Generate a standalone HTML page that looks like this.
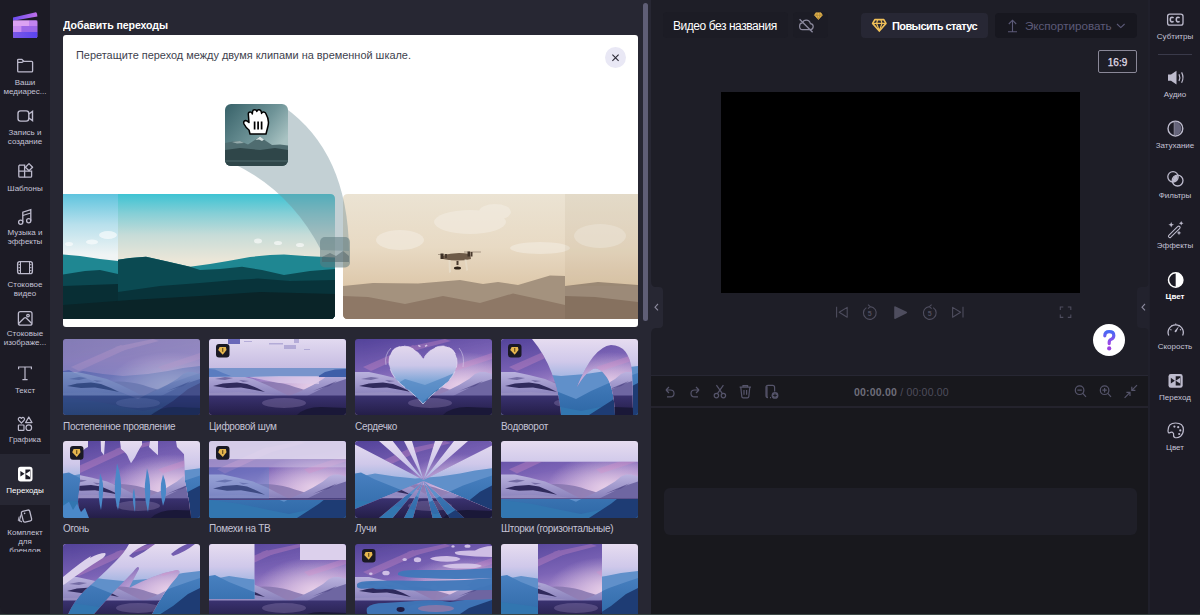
<!DOCTYPE html>
<html><head><meta charset="utf-8">
<style>
*{margin:0;padding:0;box-sizing:border-box}
html,body{width:1200px;height:615px;overflow:hidden;background:#3b4744;font-family:"Liberation Sans",sans-serif}
.a{position:absolute}
#app{position:absolute;left:0;top:0;width:1200px;height:614px;overflow:hidden;background:#1e1e27}
#lsb{left:0;top:0;width:50px;height:614px;background:#1c1b25;border-bottom-left-radius:8px}
.lt{position:absolute;left:0;width:50px;text-align:center;color:#c5c3d6;font-size:8px;line-height:9px;white-space:nowrap}
#panel{left:50px;top:0;width:601px;height:614px;background:#272733}
#main{left:651px;top:0;width:499px;height:376px;background:#1e1e27}
#tl{left:651px;top:376px;width:499px;height:238px;background:#18181d}
#rsb{left:1150px;top:0;width:50px;height:614px;background:#1c1b25;border-bottom-right-radius:8px}
.th{position:absolute;width:137px;height:76px;border-radius:3px;overflow:hidden}
.th svg{display:block}
.tl{position:absolute;color:#c5c3d6;font-size:10px;line-height:12px;margin-top:0.7px;white-space:nowrap;letter-spacing:-0.3px}
.ic{position:absolute;overflow:visible}
.badge{position:absolute;left:7px;top:5px;width:13px;height:13px;border-radius:3px;background:#1e1d26}
</style></head><body>
<div id="app">
  <!-- LEFT SIDEBAR -->
  <div id="lsb" class="a"></div>
  <div class="a" style="left:0;top:454px;width:50px;height:51px;background:#272733"></div>
  <div class="lt" style="top:78px">Ваши<br>медиарес...</div>
  <div class="lt" style="top:128px">Запись и<br>создание</div>
  <div class="lt" style="top:183.5px">Шаблоны</div>
  <div class="lt" style="top:228px">Музыка и<br>эффекты</div>
  <div class="lt" style="top:280px">Стоковое<br>видео</div>
  <div class="lt" style="top:329px">Стоковые<br>изображе...</div>
  <div class="lt" style="top:386px">Текст</div>
  <div class="lt" style="top:435px">Графика</div>
  <div class="lt" style="top:486px;color:#fff">Переходы</div>
  <div class="lt" style="top:528px;height:24px;overflow:hidden">Комплект<br>для<br>брендов</div>


  <!-- LEFT ICONS -->
  <svg class="ic" style="left:0;top:0" width="50" height="50" viewBox="0 0 50 50">
    <defs>
      <linearGradient id="lg1" x1="0" y1="0" x2="1" y2="0"><stop offset="0" stop-color="#6a4cf0"/><stop offset="1" stop-color="#c070e8"/></linearGradient>
      <linearGradient id="lg3" x1="0" y1="0" x2="1" y2="0"><stop offset="0" stop-color="#7a58e6"/><stop offset="1" stop-color="#5a44f0"/></linearGradient><linearGradient id="lg2" x1="0" y1="0" x2="1" y2="1"><stop offset="0" stop-color="#d9a0f0"/><stop offset="1" stop-color="#b070e8"/></linearGradient>
    </defs>
    <path d="M13 17.6 L34.8 12.4 Q36.6 12.1 37 13.8 L37.4 16.4 L13 20.8 Z" fill="url(#lg1)"/>
    <rect x="13" y="20.5" width="24.3" height="17.5" rx="1.5" fill="#b67ae8"/>
    <rect x="13" y="20.5" width="16" height="5.5" fill="#dba2f2"/>
    <rect x="29" y="20.5" width="8.3" height="5.5" fill="#c284ee"/>
    <rect x="13" y="26" width="8.5" height="6" fill="#c88cf0"/>
    <rect x="21.5" y="26" width="15.8" height="6" fill="#9c66e6"/>
    <path d="M13 32 H37.3 V36.5 Q37.3 38 35.8 38 H14.5 Q13 38 13 36.5 Z" fill="url(#lg3)"/>
  </svg>
  <svg class="ic" style="left:0;top:50px" width="50" height="30" viewBox="0 0 50 30" fill="none" stroke="#bdbbcd" stroke-width="1.3">
    <path d="M17.7 11.5 V9.8 Q17.7 9.3 18.5 9.3 H21.8 L23.8 11.3 H31.6 Q32.6 11.3 32.6 12.3 V21 Q32.6 21.9 31.6 21.9 H18.7 Q17.7 21.9 17.7 21 Z"/>
    <path d="M17.7 12.4 H22 L23.8 11.3"/>
  </svg>
  <svg class="ic" style="left:0;top:100px" width="50" height="30" viewBox="0 0 50 30" fill="none" stroke="#bdbbcd" stroke-width="1.4">
    <rect x="18" y="10.9" width="10.8" height="10.2" rx="2.6"/>
    <path d="M28.8 14 L32.5 11.4 V20.6 L28.8 18"/>
  </svg>
  <svg class="ic" style="left:0;top:155px" width="50" height="30" viewBox="0 0 50 30" fill="none" stroke="#bdbbcd" stroke-width="1.3">
    <path d="M19 10.2 H24.6 V22.2 H19.8 Q18.8 22.2 18.8 21.2 V11.2 Q18.8 10.2 19.8 10.2 Z"/>
    <path d="M18.8 16.2 H31.6 V21.2 Q31.6 22.2 30.6 22.2 H24.6"/>
    <path d="M29 8.6 L32.6 12.2 L29 15.8 L25.4 12.2 Z" stroke-linejoin="round"/>
  </svg>
  <svg class="ic" style="left:0;top:205px" width="50" height="25" viewBox="0 0 50 25" fill="none" stroke="#bdbbcd" stroke-width="1.3">
    <circle cx="20.7" cy="17.3" r="2.1"/>
    <circle cx="28.7" cy="15.8" r="2.1"/>
    <path d="M22.8 17.3 V7.2 L30.8 4.6 V15.8"/>
    <path d="M22.8 10.5 L30.8 8"/>
  </svg>
  <svg class="ic" style="left:0;top:255px" width="50" height="25" viewBox="0 0 50 25" fill="none" stroke="#bdbbcd" stroke-width="1.3">
    <rect x="17.6" y="6.6" width="14.8" height="12" rx="2.2"/>
    <path d="M20.5 6.6 V18.6 M29.5 6.6 V18.6" stroke-width="1"/>
    <g fill="#bdbbcd" stroke="none"><rect x="18.6" y="9" width="1.2" height="1.2"/><rect x="18.6" y="12" width="1.2" height="1.2"/><rect x="18.6" y="15" width="1.2" height="1.2"/><rect x="30.2" y="9" width="1.2" height="1.2"/><rect x="30.2" y="12" width="1.2" height="1.2"/><rect x="30.2" y="15" width="1.2" height="1.2"/></g>
  </svg>
  <svg class="ic" style="left:0;top:305px" width="50" height="25" viewBox="0 0 50 25" fill="none" stroke="#bdbbcd" stroke-width="1.3">
    <rect x="18.4" y="6.6" width="13.6" height="13.6" rx="2"/>
    <path d="M18.6 18.5 L24.2 13 Q25.2 12.2 26.2 13 L31.8 18.5"/>
    <circle cx="28" cy="10.6" r="1.3"/>
  </svg>
  <svg class="ic" style="left:0;top:360px" width="50" height="25" viewBox="0 0 50 25" fill="none" stroke="#bdbbcd" stroke-width="1.2">
    <path d="M18.6 9.2 V7 H31.4 V9.2 M25 7 V19.6 M22.4 19.6 H27.6"/>
  </svg>
  <svg class="ic" style="left:0;top:410px" width="50" height="25" viewBox="0 0 50 25" fill="none" stroke="#bdbbcd" stroke-width="1.2">
    <path d="M21.4 13 L18.6 10.2 Q17.8 9 18.8 7.9 Q20 6.9 21.4 8.3 Q22.8 6.9 24 7.9 Q25 9 24.2 10.2 Z" stroke-linejoin="round"/>
    <path d="M28.8 7 L32 12.6 H25.6 Z" stroke-linejoin="round"/>
    <rect x="18.4" y="15" width="5.6" height="5.4" rx="0.6"/>
    <circle cx="28.8" cy="17.7" r="2.8"/>
  </svg>
  <svg class="ic" style="left:0;top:460px" width="50" height="25" viewBox="0 0 50 25">
    <rect x="18" y="6.8" width="14.5" height="14.6" rx="2.6" fill="#fff"/>
    <path d="M20.4 11 V16.5 L24.6 13.8 Z" fill="#1e1d28"/>
    <path d="M25.4 9.5 H30.4 V19.3 H25.4 Z M25.4 14 L30 17 V11 Z" fill="#1e1d28" fill-rule="evenodd"/>
  </svg>
  <svg class="ic" style="left:0;top:505px" width="50" height="22" viewBox="0 0 50 22" fill="none" stroke="#bdbbcd" stroke-width="1.3">
    <rect x="22.2" y="5.6" width="8.6" height="11" rx="1.6" transform="rotate(-14 26.5 11.1)"/>
    <circle cx="24.6" cy="8.4" r="0.8" fill="#bdbbcd" stroke="none"/>
    <path d="M21.2 9.5 L19.4 15.6 L22 17" stroke-width="1.1"/>
    <path d="M19.2 11.5 L18.2 15.4 L19.6 16.4" stroke-width="0.9"/>
  </svg>

  <!-- PANEL -->
  <div id="panel" class="a"></div>
  <div class="a" style="left:63px;top:18.8px;font-size:11.4px;font-weight:700;color:#fff;letter-spacing:-0.1px;white-space:nowrap;transform:scaleX(0.93);transform-origin:0 0">Добавить переходы</div>
  <div class="a" style="left:63px;top:35px;width:575px;height:292px;background:#fff;border-radius:3px;overflow:hidden">
    <div class="a" style="left:13px;top:13.7px;font-size:11.5px;color:#403f4e;letter-spacing:0;white-space:nowrap;transform:scaleX(0.95);transform-origin:0 0">Перетащите переход между двумя клипами на временной шкале.</div>
  </div>
  <svg class="a" style="left:63px;top:35px" width="575" height="292" viewBox="63 35 575 292">
    <defs>
      <linearGradient id="skyT" gradientUnits="userSpaceOnUse" x1="0" y1="194" x2="0" y2="260"><stop offset="0" stop-color="#3ec3d3"/><stop offset="0.3" stop-color="#86cfd6"/><stop offset="0.62" stop-color="#c6dcd8"/><stop offset="1" stop-color="#ebe6d8"/></linearGradient>
      <linearGradient id="skyT2" gradientUnits="userSpaceOnUse" x1="0" y1="194" x2="0" y2="255"><stop offset="0" stop-color="#5ec4de"/><stop offset="0.5" stop-color="#b8e0ec"/><stop offset="1" stop-color="#f0f4f4"/></linearGradient>
      <linearGradient id="skyD" gradientUnits="userSpaceOnUse" x1="0" y1="194" x2="0" y2="290"><stop offset="0" stop-color="#ebe3d3"/><stop offset="0.55" stop-color="#e8dac4"/><stop offset="1" stop-color="#dcc6a8"/></linearGradient>
      <linearGradient id="mtnD" x1="0" y1="0" x2="0" y2="1"><stop offset="0" stop-color="#a6917b"/><stop offset="1" stop-color="#8c7662"/></linearGradient>
      <linearGradient id="thG" gradientUnits="userSpaceOnUse" x1="228" y1="104" x2="280" y2="146"><stop offset="0" stop-color="#3a646b"/><stop offset="0.6" stop-color="#6f9498"/><stop offset="1" stop-color="#a8c2c2"/></linearGradient>
      <clipPath id="cL"><path d="M63 194 H330 Q335 194 335 199 V314 Q335 319 330 319 H63 Z"/></clipPath>
      <clipPath id="cR"><path d="M348 194 H638 V319 H348 Q343 319 343 314 V199 Q343 194 348 194 Z"/></clipPath>
      <clipPath id="cTh"><rect x="225" y="104" width="63" height="62" rx="6"/></clipPath>
    </defs>
    <g clip-path="url(#cL)">
      <rect x="63" y="194" width="272" height="125" fill="url(#skyT)"/>
      <rect x="63" y="194" width="55" height="125" fill="url(#skyT2)"/>
      <g fill="#fff" opacity="0.6"><ellipse cx="108" cy="235" rx="9" ry="4"/><ellipse cx="92" cy="242" rx="6" ry="2.5"/><ellipse cx="69" cy="244" rx="4" ry="2"/><ellipse cx="258" cy="241" rx="4" ry="2.5"/><ellipse cx="278" cy="243" rx="4" ry="2"/><ellipse cx="300" cy="245" rx="4" ry="2"/></g>
      <path d="M63 254.5 L80 256 L100 259 L118 261 V290 H63 Z" fill="#1f8792"/>
      <path d="M63 274.5 L85 271 L100 270 L118 274 V319 H63 Z" fill="#0b4750"/>
      <path d="M63 286 L118 284 V319 H63 Z" fill="#082e34"/>
      <path d="M118 259.8 L130 258 L146 256.8 L165 261 L190 266.8 L210 264 L228 261 L250 257 L270 255 L284 254.5 L305 256 L335 257.5 V319 H118 Z" fill="#1f8792"/>
      <path d="M118 259.8 L130 258 L146 256.8 L165 261 L190 266.8 L200 270 L220 269 L242 266.8 L262 270 L284 275 L310 271 L335 269 V319 H118 Z" fill="#0b4a52"/>
      <path d="M118 292 L160 286 L200 283 L235 280 L258 278.5 L290 281 L335 280 V319 H118 Z" fill="#08333a"/>
      <path d="M63 305 L130 300 L200 296 L260 292 L335 294 V319 H63 Z" fill="#0a2428"/>
    </g>
    <g clip-path="url(#cR)">
      <rect x="343" y="194" width="295" height="125" fill="url(#skyD)"/>
      <g fill="#f4eee4" opacity="0.55"><ellipse cx="400" cy="240" rx="24" ry="10"/><ellipse cx="470" cy="222" rx="36" ry="12"/><ellipse cx="495" cy="212" rx="16" ry="8"/><ellipse cx="600" cy="236" rx="26" ry="12"/><ellipse cx="540" cy="248" rx="30" ry="6"/></g>
      <path d="M343 286 L373 283 L418 283.5 L460 280 L483 284 L498 282 L518 285 L550 275.5 L565 276 V319 H343 Z" fill="#a4927e"/>
      <path d="M343 296 L368 297 L405 304 L443 296 L480 303 L513 293.5 L543 300 L565 305 V319 H343 Z" fill="#8e7866"/>
      <path d="M565 286 L598 282 L638 285 V319 H565 Z" fill="#9c8a78"/>
      <path d="M565 296 L595 297 L638 302 V319 H565 Z" fill="#86715f"/>
      <rect x="565" y="194" width="73" height="92" fill="#8a7050" opacity="0.08"/>
      <path d="M438 254.5 H452 M464 252 H481" stroke="#6a5a4a" stroke-width="0.7" opacity="0.7"/>
      <path d="M442 256 Q455 251 470 254 L471 259 Q458 262 443 259 Z" fill="#6e5a48"/>
      <rect x="440.5" y="253.5" width="3" height="5.5" fill="#3e3026"/><rect x="445" y="254" width="2" height="4" fill="#4a3a2e"/>
      <rect x="467.5" y="251.5" width="2.5" height="5" fill="#3e3026"/><rect x="470.5" y="252" width="2" height="4.5" fill="#4a3a2e"/>
      <path d="M448.5 260 L450.5 260 L451 272 L449 273 Z" fill="#e6dac6"/>
      <path d="M464.5 259.5 L466.5 259.5 L468 270 L466.5 271 Z" fill="#e6dac6"/>
      <rect x="456.5" y="261" width="2" height="4" fill="#4a3a2e"/>
      <ellipse cx="457.5" cy="268" rx="3.6" ry="1.6" fill="#2e2218"/>
    </g>
    <path d="M232 163 Q290 190 321 250 L349 251 Q348 152 284 107 Z" fill="#6f8e98" opacity="0.42"/>
    <rect x="320" y="237" width="30" height="30.5" rx="5" fill="#5d7a80" opacity="0.55"/>
    <path d="M322 257 L330 253 L336 256 L343 251 L349 256 V262 H322 Z" fill="#4b6066" opacity="0.5"/>
    <g clip-path="url(#cTh)">
      <rect x="225" y="104" width="63" height="62" fill="url(#thG)"/>
      <path d="M225 143 L233 141.5 L240 141 L248 144.5 L254 140.5 L260 136.4 L266 141 L272 145 L280 144.5 L288 145.5 V166 H225 Z" fill="#4f6c70"/>
      <path d="M255.5 140 L260 136.4 L264 139.5 L262 141 L259 139.5 Z" fill="#d8e2e2"/>
      <path d="M232 142 L240 141 L244 143 L237 143.5 Z" fill="#a8bcbc" opacity="0.8"/>
      <path d="M225 150 L240 148 L260 150 L275 148 L288 150 V166 H225 Z" fill="#2f4649"/>
      <rect x="225" y="160" width="63" height="2" fill="#4a6266" opacity="0.6"/>
    </g>
    <path d="M250 134 L249 130 Q246 128 244 124 Q243 121 245.5 120.5 Q247 120.5 249 122.5 L248.3 114 Q248.3 112 250.2 112 Q252 112 252.3 114 L252.6 111.5 Q252.8 109.8 254.7 109.8 Q256.6 109.8 256.8 111.5 L257 111 Q257.3 109.6 259.2 109.8 Q261 110 261.3 111.8 L261.6 113.4 Q262 111.8 263.8 112 Q265.8 112.3 266.2 114.4 Q269.5 120 268 126 Q267 130 266 134 Z" fill="#fff" stroke="#000" stroke-width="1.5" stroke-linejoin="round"/>
    <path d="M254.6 121.5 V129.5 M258.1 121.5 V129.5 M261.6 121.5 V129.5" stroke="#000" stroke-width="1.7"/>
  </svg>
  <div class="a" style="left:605px;top:47px;width:21px;height:21px;border-radius:50%;background:#e9e8f5"></div>
  <svg class="a" style="left:605px;top:47px" width="21" height="21" viewBox="0 0 21 21"><path d="M7.4 7.6 L13.6 13.8 M13.6 7.6 L7.4 13.8" stroke="#2a2935" stroke-width="1.1"/></svg>

  <div class="a" style="left:643px;top:3px;width:5px;height:318px;border-radius:3px;background:#5f5e76"></div>

  <!-- MAIN -->
  <div id="main" class="a"></div>
  <div id="tl" class="a"></div>
  <div class="a" style="left:663px;top:12px;width:125px;height:26px;border-radius:4px;background:#1c1c25"></div><div class="a" style="left:793px;top:12px;width:35px;height:26px;border-radius:4px;background:#1c1c25"></div><div class="a" style="left:673px;top:19.2px;font-size:12px;color:#fff;letter-spacing:-0.45px;white-space:nowrap">Видео без названия</div>
  <div class="a" style="left:861px;top:12.5px;width:127px;height:25.5px;border-radius:4px;background:#272734"></div>
  <div class="a" style="left:892px;top:20px;font-size:11px;font-weight:700;color:#fff;letter-spacing:-0.6px;white-space:nowrap">Повысить статус</div>
  <div class="a" style="left:995px;top:13px;width:142px;height:25px;border-radius:4px;background:#17171f"></div>
  <div class="a" style="left:1025px;top:18.5px;font-size:11.7px;color:#5c5a78;letter-spacing:-0.05px;white-space:nowrap">Экспортировать</div>
  <div class="a" style="left:1098px;top:50px;width:39px;height:23px;border:1px solid #8a8898;border-radius:2px;color:#e0dfea;font-size:10px;font-weight:400;text-align:center;line-height:23px;-webkit-text-stroke:0.25px #e0dfea">16:9</div>
  <div class="a" style="left:721px;top:92px;width:359px;height:201px;background:#000"></div>
  <div class="a" style="left:1093px;top:324px;width:32px;height:32px;border-radius:50%;background:#fff"></div>
  <div class="a" style="left:651px;top:375px;width:497px;height:1px;background:#272733"></div><div class="a" style="left:651px;top:406px;width:497px;height:2px;background:#24232d"></div>
  <div class="a" style="left:854px;top:386px;font-size:10.5px;font-weight:700;color:#6e6d7a;white-space:nowrap;letter-spacing:0.2px">00:00.00 <span style="color:#4e4d5c;font-weight:400">/ 00:00.00</span></div>
  <div class="a" style="left:664px;top:488px;width:473px;height:47px;border-radius:6px;background:#1f1f28"></div>

  <div class="a" style="left:1148px;top:0;width:3px;height:614px;background:#20202b"></div>
  <!-- RIGHT SIDEBAR -->
  <div id="rsb" class="a"></div>
  <div class="lt" style="left:1150px;top:32px">Субтитры</div>
  <div class="a" style="left:1158px;top:54px;width:34px;height:1px;background:#3a3a4a"></div>
  <div class="lt" style="left:1150px;top:90px">Аудио</div>
  <div class="lt" style="left:1150px;top:141px">Затухание</div>
  <div class="lt" style="left:1150px;top:191px">Фильтры</div>
  <div class="lt" style="left:1150px;top:241px">Эффекты</div>
  <div class="lt" style="left:1150px;top:292px;color:#fff;font-weight:700">Цвет</div>
  <div class="lt" style="left:1150px;top:342px">Скорость</div>
  <div class="lt" style="left:1150px;top:393px">Переход</div>
  <div class="lt" style="left:1150px;top:443px">Цвет</div>


  <!-- RIGHT ICONS -->
  <svg class="ic" style="left:1150px;top:0" width="50" height="460" viewBox="1150 0 50 460" fill="none" stroke="#bdbbcd" stroke-width="1.3">
    <rect x="1167.6" y="14.1" width="15.4" height="11" rx="2.2"/>
    <path d="M1173.6 17.8 Q1172.8 17.2 1172 17.2 Q1170.3 17.2 1170.3 19.6 Q1170.3 22 1172 22 Q1172.8 22 1173.6 21.4 M1179.6 17.8 Q1178.8 17.2 1178 17.2 Q1176.3 17.2 1176.3 19.6 Q1176.3 22 1178 22 Q1178.8 22 1179.6 21.4" stroke-width="1.5"/>
    <path d="M1168 74.5 H1171 L1176.5 70.8 V84.5 L1171 80.8 H1168 Z" fill="#bdbbcd" stroke="none"/>
    <path d="M1179 74.3 Q1180.6 77.6 1179 81 M1181.6 72.4 Q1184.4 77.6 1181.6 82.8" stroke-width="1.2"/>
    <circle cx="1175.4" cy="128.6" r="7.4" stroke-width="1.4"/>
    <path d="M1174.4 121.6 A7 7 0 0 1 1174.4 135.6 Z" fill="#66657c" stroke="none"/><path d="M1174.2 121.6 V135.6" stroke="#bdbbcd" stroke-width="0.6"/>
    <circle cx="1173" cy="176.8" r="5.2"/>
    <circle cx="1177.6" cy="180.6" r="5.4"/>
    <path d="M1177.5 175.2 A5.4 5.4 0 0 1 1173 182 A5.2 5.2 0 0 1 1177.5 175.2 Z" fill="#bdbbcd" stroke="none"/>
    <path d="M1168.8 235.4 L1177.6 226.6 Q1178.8 225.6 1179.8 226.6 Q1180.6 227.6 1179.6 228.6 L1170.8 237.2 Q1169.8 238 1168.9 237.2 Q1168 236.3 1168.8 235.4 Z" stroke-width="1.1"/>
    <g fill="#bdbbcd" stroke="none"><path d="M1171.2 222 L1172 224 L1174 224.8 L1172 225.6 L1171.2 227.6 L1170.4 225.6 L1168.4 224.8 L1170.4 224 Z"/><path d="M1181.2 221 L1181.9 222.6 L1183.5 223.3 L1181.9 224 L1181.2 225.6 L1180.5 224 L1178.9 223.3 L1180.5 222.6 Z"/><path d="M1179 230.6 L1179.7 232.2 L1181.3 232.9 L1179.7 233.6 L1179 235.2 L1178.3 233.6 L1176.7 232.9 L1178.3 232.2 Z"/></g>
    <circle cx="1175.7" cy="280" r="7.2" stroke="#fff" stroke-width="1.5"/>
    <path d="M1175.7 272.8 A7.2 7.2 0 0 1 1175.7 287.2 Z" fill="#fff" stroke="none"/>
    <path d="M1168.8 335.6 A7.6 7.6 0 1 1 1182.6 335.6" stroke-width="1.3"/>
    <path d="M1170.3 329.5 L1171.5 330 M1175.7 323.5 V324.8 M1181.1 329.5 L1179.9 330 M1171.6 325.2 L1172.4 326.2 M1179.8 325.2 L1179 326.2" stroke-width="1.1"/>
    <path d="M1179.2 325.8 L1176.6 331.6 Q1175.6 332.8 1174.8 332 Q1174.2 331.2 1175.2 330.2 Z" fill="#bdbbcd" stroke="none"/>
    <rect x="1168.5" y="374" width="14.2" height="13.8" rx="2.4" fill="#bdbbcd" stroke="none"/>
    <path d="M1170.8 377.8 V383.6 L1174.9 380.7 Z" fill="#1b1a23" stroke="none"/>
    <path d="M1175.7 376.2 H1180.5 V385.6 H1175.7 Z M1175.7 380.7 L1180.1 383.6 V377.8 Z" fill="#1b1a23" fill-rule="evenodd" stroke="none"/>
    <path d="M1175.6 423 Q1183.4 423 1183.4 429.6 Q1183.4 433.8 1180.6 436.2 Q1178 438.2 1175.2 437.6 Q1173.2 437 1173.6 435 Q1174 433.2 1172.6 432.4 Q1171.2 431.8 1169.8 432.8 Q1168 433.6 1168 430.6 Q1168 423 1175.6 423 Z" stroke-width="1.2"/>
    <g fill="#bdbbcd" stroke="none"><circle cx="1174.4" cy="426.6" r="1.1"/><circle cx="1178.2" cy="427.2" r="1.1"/><circle cx="1180.3" cy="430.4" r="1.1"/><circle cx="1179.2" cy="434" r="1.1"/></g>
  </svg>
  <!-- MAIN ICONS -->
  <svg class="ic" style="left:651px;top:0" width="499" height="420" viewBox="651 0 499 420" fill="none" stroke="#8c8a9e" stroke-width="1.2">
    <path d="M802.4 29.6 H810.2 Q813.2 29.6 813.2 26.6 Q813.2 23.8 810.4 23.6 Q809.6 20.2 806.2 20.2 Q803.4 20.2 802.4 22.8 Q799.6 23 799.6 26.2 Q799.6 29.6 802.4 29.6 Z" stroke="#8c8a9e"/>
    <path d="M799.6 19.2 L812.6 32.2" stroke="#8c8a9e" stroke-width="1.3"/>
    <path d="M815.8 12.8 H821 L822.4 15.2 L818.4 19.6 L814.4 15.2 Z" fill="#e6b64e" stroke="#e6b64e" stroke-width="0.6" stroke-linejoin="round"/><path d="M814.6 15.2 H822.2 M817.2 13 L816.8 15.2 L818.4 19.2 L820 15.2 L819.6 13" stroke="#8a6a28" stroke-width="0.5"/>
    <path d="M874.8 19.6 H883.8 L886 23.4 L879.3 31 L872.6 23.4 Z" stroke="#f0c058" stroke-width="1.6" stroke-linejoin="round"/>
    <path d="M872.8 23.4 H885.8 M877.6 19.8 L876.6 23.4 L879.3 30.6 L882 23.4 L881 19.8" stroke="#f0c058" stroke-width="1.2"/>
    <path d="M1012.5 31.4 V20.4 M1008.8 24 L1012.5 20.2 L1016.2 24 M1008 31.8 H1017" stroke="#5c5a78" stroke-width="1.1"/>
    <path d="M1117 24 L1120.8 27.6 L1124.6 24" stroke="#5c5a78" stroke-width="1.1"/>
    <g stroke="#4e4d5e" stroke-width="1.1">
      <path d="M836.6 306.8 V317.6 M847.2 307.4 V317.2 L839.2 312.3 Z" stroke-linejoin="round"/>
      <path d="M952.6 307.4 V317.2 L960.6 312.3 Z M963 306.8 V317.6" stroke-linejoin="round"/>
      <path d="M866.4 307.6 A6.4 6.4 0 1 0 870.2 306.6 M870.2 306.6 L868 304.6 M870.2 306.6 L868 308.6"/>
      <path d="M933.2 307.6 A6.4 6.4 0 1 1 929.4 306.6 M929.4 306.6 L931.6 304.6 M929.4 306.6 L931.6 308.6"/>
      <path d="M1060.3 310 V307 H1063.3 M1067.8 307 H1070.8 V310 M1070.8 314.4 V317.4 H1067.8 M1063.3 317.4 H1060.3 V314.4"/>
    </g>
    <text x="869.8" y="316.4" font-family="Liberation Sans" font-size="7" font-weight="700" fill="#4e4d5e" stroke="none" text-anchor="middle">5</text>
    <text x="929.8" y="316.4" font-family="Liberation Sans" font-size="7" font-weight="700" fill="#4e4d5e" stroke="none" text-anchor="middle">5</text>
    <path d="M895.6 306.4 Q894.2 305.6 894.2 307.4 V317.8 Q894.2 319.6 895.6 318.8 L906.6 313.2 Q907.8 312.6 906.6 311.8 Z" fill="#4e4d5e" stroke="none"/>
    <g stroke="#55546a" stroke-width="1.2">
      <path d="M666 390 L669 387 M666 390 L669 393 M666.2 390 H670.4 Q674 390 674 393.4 Q674 396.8 670.4 396.8 H667"/>
      <path d="M699 390 L696 387 M699 390 L696 393 M698.8 390 H694.6 Q691 390 691 393.4 Q691 396.8 694.6 396.8 H698"/>
      <circle cx="716.4" cy="395.6" r="2.2"/><circle cx="723.4" cy="395.6" r="2.2"/>
      <path d="M717.4 393.6 L723.4 385.2 M722.4 393.6 L716.4 385.2"/>
      <path d="M739.6 387.2 H751 M743 387.2 V385.6 H747.6 V387.2 M740.8 387.2 L741.8 396.6 Q742 397.8 743.2 397.8 H747.4 Q748.6 397.8 748.8 396.6 L749.8 387.2 M744 390 V394.8 M746.6 390 V394.8"/>
      <path d="M768 397.6 Q766 397.6 766 395.6 V387.4 Q766 385.4 768 385.4 H772.6 Q774.6 385.4 774.6 387.4 V391.6 M770 397.6 H771"/>
      <path d="M766.6 387 V397 M767.2 386.2 V398" stroke-width="0.8"/>
    </g>
    <circle cx="775" cy="395.4" r="3.4" fill="#55546a" stroke="none"/>
    <path d="M775 393.6 V397.2 M773.2 395.4 H776.8" stroke="#18181d" stroke-width="1"/>
    <g stroke="#55546a" stroke-width="1.2">
      <circle cx="1079.6" cy="390.2" r="4.3"/><path d="M1082.8 393.4 L1086 396.8 M1077.4 390.2 H1081.8"/>
      <circle cx="1104.6" cy="390.2" r="4.3"/><path d="M1107.8 393.4 L1111 396.8 M1102.4 390.2 H1106.8 M1104.6 388 V392.4"/>
      <path d="M1124.6 397.8 L1130 392.4 M1126.4 392.4 H1130 V396 M1137 385.2 L1131.8 390.4 M1131.8 386.8 V390.4 H1135.4"/>
    </g>
    <path d="M651 281 Q651 287 656 287 H659 Q663 287 663 291 V324 Q663 328 659 328 H656 Q651 328 651 334 Z" fill="#272733" stroke="none"/>
    <path d="M658 304 L655 307.2 L658 310.4" stroke="#8c8a9e" stroke-width="1.1"/>
    <path d="M1149 281 Q1149 287 1144 287 H1141 Q1137 287 1137 291 V324 Q1137 328 1141 328 H1144 Q1149 328 1149 334 Z" fill="#22222d" stroke="none"/>
    <path d="M1145 304 L1142 307.2 L1145 310.4" stroke="#8c8a9e" stroke-width="1.1"/>
  </svg>
  <svg class="a" style="left:1093px;top:324px" width="32" height="32" viewBox="0 0 32 32">
    <defs><linearGradient id="qg" x1="0" y1="0" x2="0" y2="1"><stop offset="0" stop-color="#4868f4"/><stop offset="1" stop-color="#9a48e6"/></linearGradient></defs>
    <path d="M11.8 11.8 Q11.8 7.6 16.2 7.6 Q20.8 7.6 20.8 11.4 Q20.8 14.2 18 15.4 Q16.2 16.2 16.2 18.4 V19.6" fill="none" stroke="url(#qg)" stroke-width="3.2" stroke-linecap="round"/>
    <circle cx="16.2" cy="24.4" r="2.1" fill="#9a40e0"/>
  </svg>

  <!-- THUMBS -->
  <svg width="0" height="0" style="position:absolute">
    <defs>
      <linearGradient id="aSky" x1="0" y1="0" x2="0.35" y2="1"><stop offset="0" stop-color="#53439a"/><stop offset="0.45" stop-color="#7c64b6"/><stop offset="0.8" stop-color="#b898d2"/><stop offset="1" stop-color="#d2b6de"/></linearGradient>
      <radialGradient id="aGlow" cx="0.78" cy="0.62" r="0.45"><stop offset="0" stop-color="#ecd4ea" stop-opacity="0.95"/><stop offset="1" stop-color="#ecd4ea" stop-opacity="0"/></radialGradient>
      <linearGradient id="aLake" x1="0" y1="0" x2="0" y2="1"><stop offset="0" stop-color="#3a3270"/><stop offset="1" stop-color="#241e48"/></linearGradient>
      <linearGradient id="aSnow" x1="0" y1="0" x2="0" y2="1"><stop offset="0" stop-color="#bab2de"/><stop offset="1" stop-color="#8880ba"/></linearGradient>
      <linearGradient id="bSky" x1="0" y1="0" x2="0" y2="1"><stop offset="0" stop-color="#e6dcf0"/><stop offset="0.3" stop-color="#cfc8ea"/><stop offset="0.5" stop-color="#a4b6e2"/><stop offset="1" stop-color="#6e9ad2"/></linearGradient>
      <linearGradient id="bMtn" x1="0" y1="0" x2="0" y2="1"><stop offset="0" stop-color="#4880c0"/><stop offset="1" stop-color="#2e68a6"/></linearGradient>
      <symbol id="imgA" viewBox="0 0 137 76">
        <rect width="137" height="76" fill="url(#aSky)"/>
        <rect width="137" height="76" fill="url(#aGlow)"/>
        <g fill="#d890c8" opacity="0.32"><path d="M8 28 L58 6 L64 10 L16 32 Z"/><path d="M52 8 L90 0 L96 2 L58 12 Z"/><path d="M95 28 L137 14 V20 L100 32 Z"/></g>
        <path d="M38 44 Q60 40 80 46 Q92 50 100 52 V57 H38 Z" fill="#8676ae" opacity="0.85"/>
        <path d="M0 33 L14 33 L28 36 L44 40 L58 46 L70 52 L80 57 H0 Z" fill="url(#aSnow)"/>
        <path d="M4 47 L14 44.5 L28 43.5 L38 45 L48 49 L56 53 L46 51 L32 48.5 L18 49 Z" fill="#302a5c"/>
        <path d="M6 40 L16 38 L24 39 L16 41 Z M30 41 L40 42 L34 43 Z" fill="#5c5490" opacity="0.7"/>
        <path d="M0 54 L30 53 L60 55 L74 57 H0 Z" fill="#9890c2" opacity="0.8"/>
        <path d="M80 57 L92 52 L104 46 L114 40 L120 35 L125 33 L130 33 L137 35 V57 Z" fill="url(#aSnow)"/>
        <path d="M98 57 L110 51 L122 45 L137 40 V57 Z" fill="#6e66a2"/>
        <path d="M104 52 L116 47 L128 42 L120 47 Z" fill="#4a4282" opacity="0.7"/>
        <rect y="56.5" width="137" height="19.5" fill="url(#aLake)"/>
        <ellipse cx="75" cy="64" rx="22" ry="5" fill="#9484b6" opacity="0.35"/>
        <path d="M88 76 Q96 68 112 68 L137 69 V76 Z" fill="#1a1838"/>
      </symbol>
      <symbol id="imgB" viewBox="0 0 137 76">
        <rect width="137" height="76" fill="url(#bSky)"/>
        <path d="M0 36 L20 32 L40 35 L60 37 L85 35 L105 32 L120 29 L137 27 V76 H0 Z" fill="#6090ca"/>
        <path d="M0 32 L6 31 L20 38 L40 46 L60 54 L75 60 L90 52 L108 44 L125 38 L137 34 V76 H0 Z" fill="url(#bMtn)"/>
        <path d="M0 58 L30 62 L60 68 L80 72 L137 60 V76 H0 Z" fill="#3276b0"/>
        <path d="M88 76 L110 62 L125 50 L137 44 V76 Z" fill="#1e3c74"/>
      </symbol>
      <clipPath id="clHeart"><path d="M68 20 Q60 7 48 7 Q34 8 34 24 Q35 38 52 50 Q62 58 68 65 Q74 58 84 50 Q101 38 102 24 Q102 8 88 7 Q76 7 68 20 Z"/></clipPath>
      <clipPath id="clWhirl"><path d="M0 0 H31 Q56 30 60 76 H0 Z"/><path d="M76 48 Q92 8 110 6 Q128 6 131 32 L132 76 H114 Q113 46 104 36 Q98 28 92 30 Q84 34 76 48 Z"/></clipPath>
      <clipPath id="clFire"><path d="M17 76 L15 60 L17 40 L17 14 Q20 8 25 6 L25 0 H37.7 L38 10 L41 14 L42 0 H57 L58 8 Q64 12 66 18 L68 22 L72 16 Q76 8 79 4 L79 0 H87 L86 6 Q90 10 95 14 L95 0 H113 L114 6 Q118 10 121 13 L122 40 L126 60 L128 76 Z"/></clipPath>
      <clipPath id="clRays"><path d="M68.5 38.5 L0 3.5 V0 H24 Z"/><path d="M68.5 38.5 L37.7 0 H49 Z"/><path d="M68.5 38.5 L57 0 H80 Z"/><path d="M68.5 38.5 L88 0 H99 Z"/><path d="M68.5 38.5 L113 0 H137 V4.5 Z"/><path d="M68.5 39.5 L0 67 V76 H24 Z"/><path d="M68.5 39.5 L37.7 76 H49 Z"/><path d="M68.5 39.5 L58 76 H77.6 Z"/><path d="M68.5 39.5 L86.8 76 H94.7 Z"/><path d="M68.5 39.5 L109.6 76 H137 V68 Z"/></clipPath>
      <clipPath id="clStripH"><rect y="20.5" width="137" height="36.5"/></clipPath>
      <clipPath id="clStripV"><rect x="37" width="64" height="76"/></clipPath>
      <clipPath id="clTV"><rect width="137" height="58"/></clipPath>
      <clipPath id="clBrush"><path d="M0 0 H137 V76 H0 Z"/></clipPath>
      <symbol id="badge" viewBox="0 0 14 14">
        <rect x="0" y="0" width="13.5" height="13.5" rx="3" fill="#1a1924"/>
        <path d="M3.6 3 H9.9 L10.5 6 L6.75 10.7 L2.2 6 Z" fill="#e6b64e"/>
        <path d="M6.75 4 V7.8" stroke="#3a2c10" stroke-width="0.9"/>
      </symbol>
    </defs>
  </svg>
  <!-- row1 -->
  <svg class="th" style="left:63px;top:339px" width="137" height="76" viewBox="0 0 137 76"><use href="#imgA"/><use href="#imgB" opacity="0.45"/><rect width="137" height="76" fill="#2a3a78" opacity="0.15"/></svg>
  <svg class="th" style="left:209px;top:339px" width="137" height="76" viewBox="0 0 137 76">
    <use href="#imgA"/>
    <defs><linearGradient id="dnTop" x1="0" y1="0" x2="0" y2="1"><stop offset="0" stop-color="#e2daf0"/><stop offset="1" stop-color="#c6bce2"/></linearGradient></defs>
    <rect width="137" height="29" fill="url(#dnTop)"/>
    <path d="M0 29 H137 V38 H0 Z" fill="#7894cc"/>
    <path d="M0 30 L6 30.5 L14 34 L22 37 L0 38 Z" fill="#5a7cc0"/>
    <path d="M108 38 L116 33 L126 30.5 L137 30 V38 Z" fill="#3e5ea8"/>
    <path d="M40 38 L70 37 L110 37 V45 L70 44 Z" fill="#dccbea" opacity="0.7"/>
    <g fill="#6a68b8"><rect x="19" y="0" width="12" height="5"/></g>
    <g fill="#9890c8" opacity="0.6"><rect x="60" y="4" width="14" height="1.5"/><rect x="75" y="6" width="12" height="4"/><rect x="85" y="0" width="5" height="4"/><rect x="35" y="2" width="8" height="1"/><rect x="95" y="10" width="6" height="1"/></g>
    <use href="#badge" x="7" y="5" width="14" height="14"/>
  </svg>
  <svg class="th" style="left:355px;top:339px" width="137" height="76" viewBox="0 0 137 76">
    <use href="#imgA"/>
    <defs><linearGradient id="hg" x1="0" y1="0" x2="0" y2="1"><stop offset="0.05" stop-color="#e6daee"/><stop offset="0.35" stop-color="#cbc6e8"/><stop offset="0.55" stop-color="#82a8d8"/><stop offset="1" stop-color="#3a7ab6"/></linearGradient></defs><g clip-path="url(#clHeart)"><rect width="137" height="76" fill="url(#hg)"/><path d="M30 52 L50 40 L70 46 L90 38 L104 32 V70 H30 Z" fill="#4a82c0" opacity="0.6"/><path d="M60 70 L80 52 L100 40 V70 Z" fill="#2e6aa8" opacity="0.7"/></g>
    <path d="M68 20 Q60 7 48 7 Q34 8 34 24 Q35 38 52 50 Q62 58 68 65 Q74 58 84 50 Q101 38 102 24 Q102 8 88 7 Q76 7 68 20 Z" fill="none" stroke="#e8e0f4" stroke-width="0.9" stroke-dasharray="10 4" opacity="0.75"/><g fill="none" stroke="#d8d0ee" stroke-width="0.8" opacity="0.7"><path d="M31 26 Q29 16 36 9"/><path d="M104 9 Q110 16 108 28"/></g><g fill="#e8e0f4" opacity="0.8"><rect x="63" y="6" width="2.5" height="1.5" transform="rotate(30 64 7)"/><rect x="70" y="6" width="2.5" height="1.5" transform="rotate(-30 71 7)"/></g>
  </svg>
  <svg class="th" style="left:501px;top:339px" width="137" height="76" viewBox="0 0 137 76">
    <use href="#imgB"/>
    <g clip-path="url(#clWhirl)"><use href="#imgA"/></g>
    <use href="#badge" x="7" y="5" width="14" height="14"/>
  </svg>
  <div class="tl" style="left:63px;top:420px">Постепенное проявление</div>
  <div class="tl" style="left:209px;top:420px">Цифровой шум</div>
  <div class="tl" style="left:355px;top:420px">Сердечко</div>
  <div class="tl" style="left:501px;top:420px">Водоворот</div>
  <!-- row2 -->
  <svg class="th" style="left:63px;top:441px;height:77px" width="137" height="77" viewBox="0 0 137 76" preserveAspectRatio="none">
    <use href="#imgB"/>
    <g clip-path="url(#clFire)"><use href="#imgA"/></g>
    <g fill="#4a88c8"><path d="M37 32 Q41 40 40 52 Q39 62 38 68 Q35 58 36 46 Z"/><path d="M54 22 Q59 36 58 52 L55 68 Q51 56 52 40 Z"/><path d="M84 27 Q88 40 87 56 L85 70 Q81 56 82 42 Z"/><path d="M100 33 Q105 44 102 58 L100 64 Q97 52 98 42 Z"/><path d="M71 47 Q73 55 72 70 Q69 60 70 50 Z"/><path d="M0 64 L6 60 L10 68 L14 62 L18 70 L22 66 L26 76 H0 Z"/></g>
    <use href="#badge" x="7" y="5" width="14" height="14"/>
  </svg>
  <svg class="th" style="left:209px;top:441px;height:77px" width="137" height="77" viewBox="0 0 137 76" preserveAspectRatio="none">
    <use href="#imgB"/>
    <g clip-path="url(#clTV)"><use href="#imgA"/></g>
    <rect width="137" height="18" fill="#e2daf0" opacity="0.9"/><rect y="18" width="137" height="8" fill="#d8cce8" opacity="0.45"/>
    <rect x="0" y="26" width="60" height="31" fill="#5a86cc" opacity="0.35"/><rect x="0" y="18" width="137" height="1" fill="#a898cc" opacity="0.5"/>
    <use href="#badge" x="7" y="5" width="14" height="14"/>
  </svg>
  <svg class="th" style="left:355px;top:441px;height:77px" width="137" height="77" viewBox="0 0 137 76" preserveAspectRatio="none">
    <use href="#imgB"/>
    <g clip-path="url(#clRays)"><use href="#imgA"/></g>
  </svg>
  <svg class="th" style="left:501px;top:441px;height:77px" width="137" height="77" viewBox="0 0 137 76" preserveAspectRatio="none">
    <use href="#imgB"/>
    <g clip-path="url(#clStripH)"><use href="#imgA"/></g>
  </svg>
  <div class="tl" style="left:63px;top:522px">Огонь</div>
  <div class="tl" style="left:209px;top:522px">Помехи на ТВ</div>
  <div class="tl" style="left:355px;top:522px">Лучи</div>
  <div class="tl" style="left:501px;top:522px">Шторки (горизонтальные)</div>
  <!-- row3 -->
  <svg class="th" style="left:63px;top:544px" width="137" height="76" viewBox="0 0 137 76">
    <defs><clipPath id="clBr"><path d="M0 0 H66 Q62 8 52 18 Q36 34 22 46 Q8 60 3 76 H0 Z"/><path d="M26 76 Q46 52 70 28 Q76 20 76 25 Q70 36 66 44 Q92 30 114 26 Q119 27 114 33 Q100 48 86 76 Z"/><path d="M66 12 Q74 4 84 0 H92 Q82 8 70 14 Z"/><path d="M108 10 Q116 3 124 0 H132 Q122 8 110 12 Z"/></clipPath></defs>
    <use href="#imgB"/>
    <g clip-path="url(#clBr)"><use href="#imgA"/></g>
    <path d="M0 33 Q18 18 28 12 L27 14 Q36 9 42 9 Q44 10 40 14 Q22 25 2 40 L0 41 Z" fill="#dcd2ec"/>
  </svg>
  <svg class="th" style="left:209px;top:544px" width="137" height="76" viewBox="0 0 137 76">
    <use href="#imgA"/>
    <defs><clipPath id="clBlk"><rect x="0" y="0" width="45.5" height="55"/></clipPath></defs><g clip-path="url(#clBlk)"><use href="#imgB"/></g>
    <rect x="91" y="0" width="46" height="16" fill="#dcd0ec"/>
  </svg>
  <svg class="th" style="left:355px;top:544px" width="137" height="76" viewBox="0 0 137 76">
    <use href="#imgA"/>
    <g fill="#d4c4e8" opacity="0.95"><path d="M100 8 Q104 6 120 6.5 Q128 2 137 2 V13 Q120 13 104 11 Q99 10 100 8 Z"/><ellipse cx="112.5" cy="2.2" rx="3" ry="1.6"/><ellipse cx="98" cy="2.4" rx="1.6" ry="1.2"/><path d="M75 14.5 Q78 12 92 12 Q104 12.5 105.5 15 Q104 17.5 92 17.7 Q78 17.5 75 14.5 Z"/><path d="M87 22 Q92 19.5 108 19.5 Q124 19 127 22 Q124 24.5 108 24.6 Q92 24.5 87 22 Z"/><ellipse cx="49.7" cy="15.4" rx="2.2" ry="1.5"/><ellipse cx="62.5" cy="15.7" rx="3.7" ry="2.5"/><ellipse cx="15.8" cy="29.7" rx="1.8" ry="1.3"/><ellipse cx="31" cy="29" rx="3.7" ry="2.3"/><ellipse cx="79" cy="43.5" rx="3.2" ry="2.2"/><path d="M94 44 Q98 41 110 41.5 Q116 42 115 44 Q110 46.5 98 46.5 Q94 46 94 44 Z"/></g>
    <g fill="#4078ba" opacity="0.95"><path d="M43 29 Q45 26 60 26 L100 26 Q120 25 137 24 V34 Q100 36 70 34 Q50 34 43 31 Z"/><path d="M2 40 Q4 37 17 37 Q40 36 70 37 L110 36 Q124 35 137 34 V46 Q110 46 90 47 Q60 47 30 45 Q20 46 18 44 Q4 46 2 43 Z"/><path d="M12 64 Q16 59 30 59 L60 57 Q80 55 95 58 L110 56 Q124 56 137 55 V76 H20 Q10 72 12 64 Z"/></g>
    <ellipse cx="81" cy="64.5" rx="18" ry="3.5" fill="#8a78a8" opacity="0.9"/>
    <ellipse cx="45.6" cy="65.5" rx="4" ry="2.4" fill="#201c44"/>
    <path d="M96 76 L114 64 L137 56 V76 Z" fill="#1e3c74"/>
    <use href="#badge" x="7" y="5" width="14" height="14"/>
  </svg>
  <svg class="th" style="left:501px;top:544px" width="137" height="76" viewBox="0 0 137 76">
    <use href="#imgB"/>
    <g clip-path="url(#clStripV)"><use href="#imgA"/></g>
  </svg>
</div>
</body></html>
